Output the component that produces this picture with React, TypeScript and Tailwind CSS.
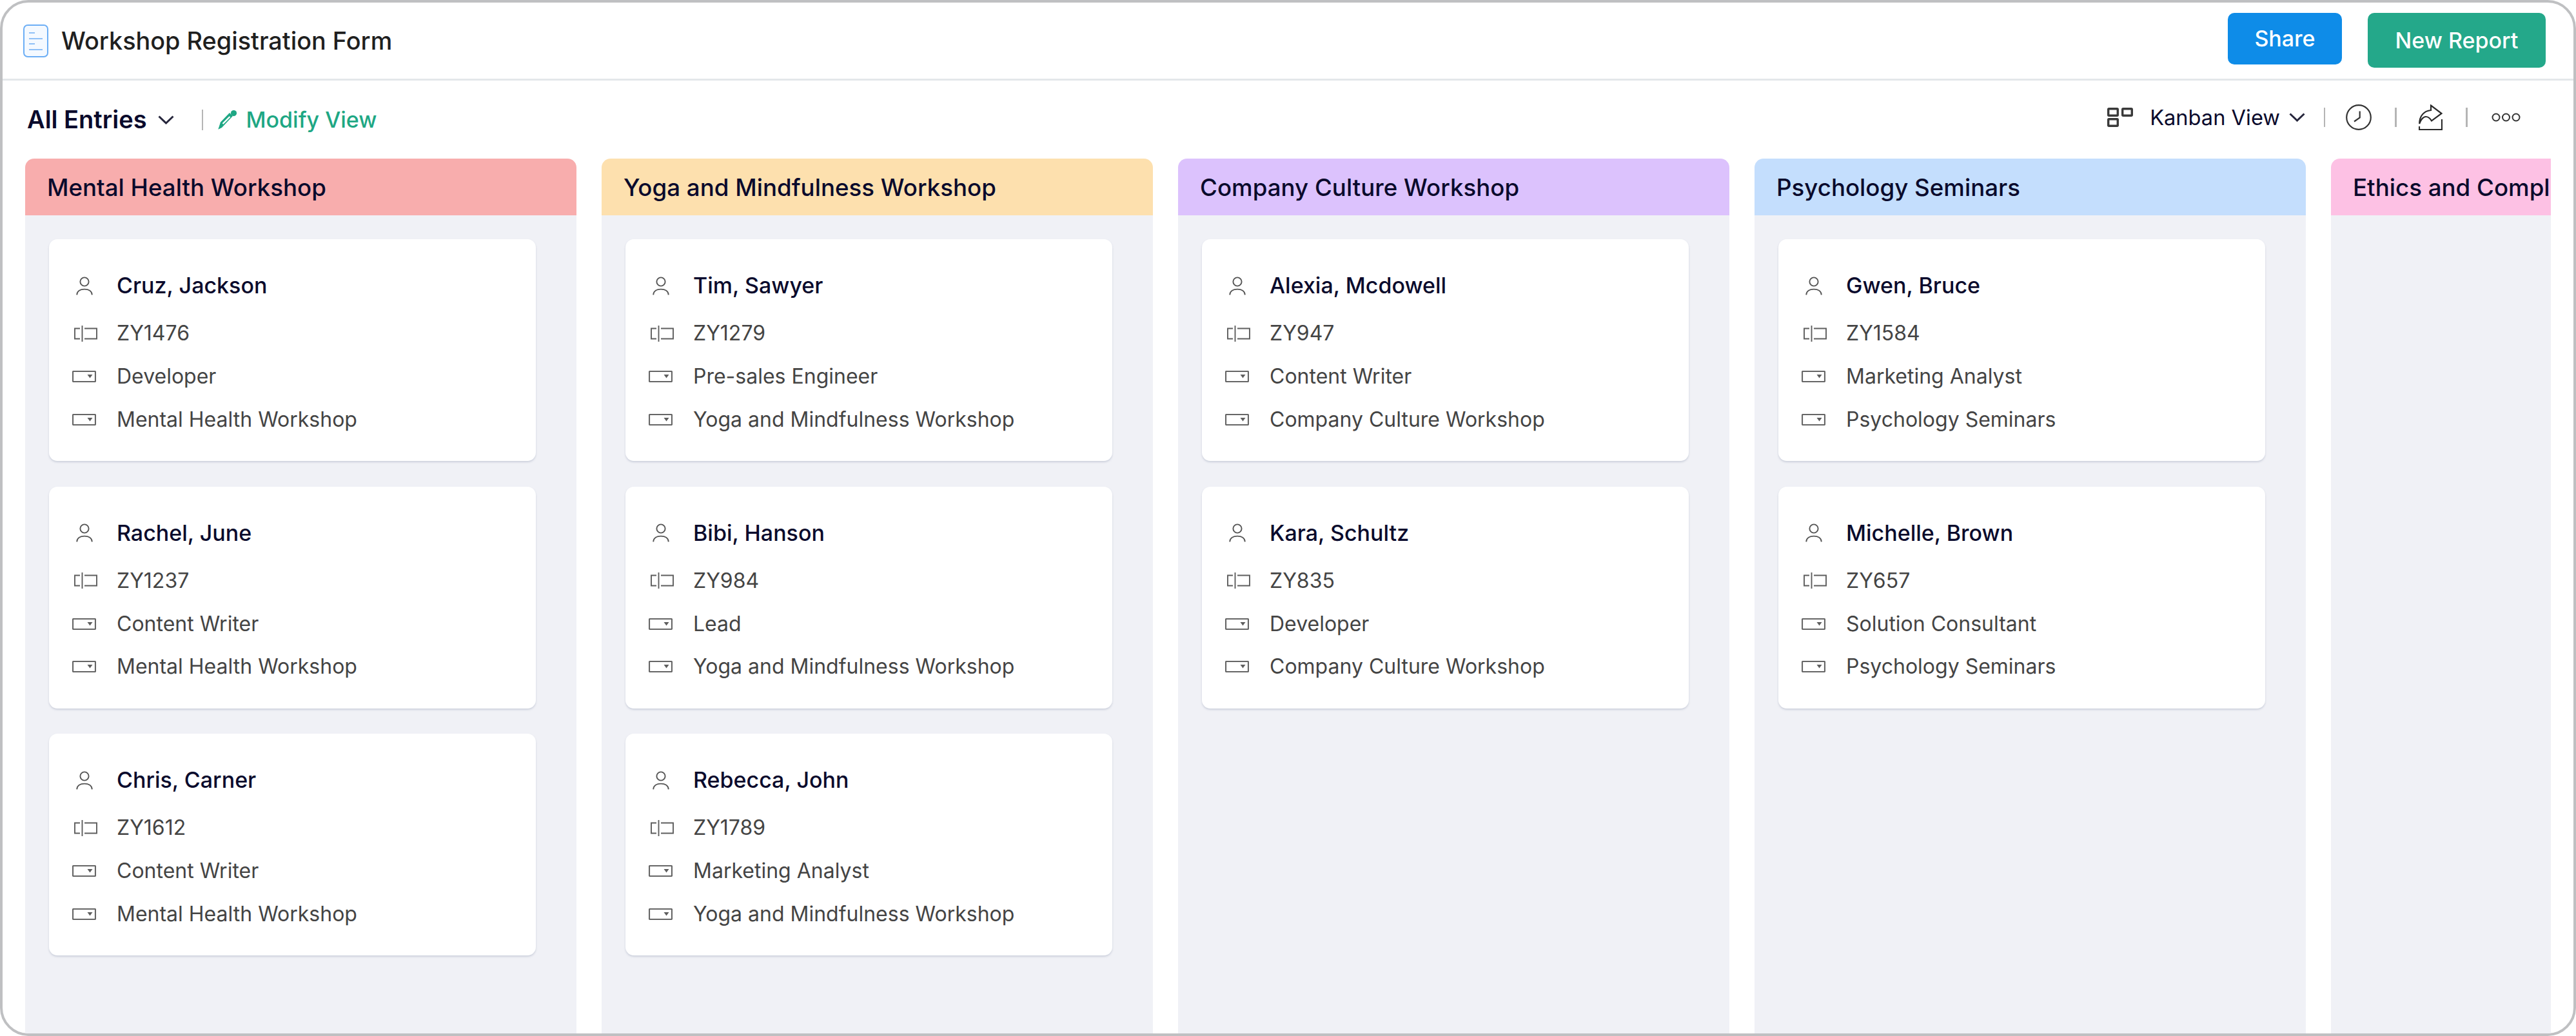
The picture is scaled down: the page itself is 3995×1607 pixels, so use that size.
const font = "font-['Inter','Liberation_Sans',sans-serif]";

type Entry = { name: string; id: string; role: string };
type Column = { title: string; header: string; entries: Entry[] };

const columns: Column[] = [
  {
    title: "Mental Health Workshop",
    header: "bg-[#f8adad]",
    entries: [
      { name: "Cruz, Jackson", id: "ZY1476", role: "Developer" },
      { name: "Rachel, June", id: "ZY1237", role: "Content Writer" },
      { name: "Chris, Carner", id: "ZY1612", role: "Content Writer" },
    ],
  },
  {
    title: "Yoga and Mindfulness Workshop",
    header: "bg-[#fde0ae]",
    entries: [
      { name: "Tim, Sawyer", id: "ZY1279", role: "Pre-sales Engineer" },
      { name: "Bibi, Hanson", id: "ZY984", role: "Lead" },
      { name: "Rebecca, John", id: "ZY1789", role: "Marketing Analyst" },
    ],
  },
  {
    title: "Company Culture Workshop",
    header: "bg-[#dcc2fd]",
    entries: [
      { name: "Alexia, Mcdowell", id: "ZY947", role: "Content Writer" },
      { name: "Kara, Schultz", id: "ZY835", role: "Developer" },
    ],
  },
  {
    title: "Psychology Seminars",
    header: "bg-[#c4defd]",
    entries: [
      { name: "Gwen, Bruce", id: "ZY1584", role: "Marketing Analyst" },
      { name: "Michelle, Brown", id: "ZY657", role: "Solution Consultant" },
    ],
  },
  {
    title: "Ethics and Compliance Workshop",
    header: "bg-[#fdc1e4]",
    entries: [],
  },
];

function UserIcon() {
  return (
    <svg width="26" height="29" viewBox="0 0 26 29" fill="none" stroke="#555" strokeWidth="1.9" className="ml-[6px] shrink-0">
      <circle cx="13" cy="8" r="6.6" />
      <path d="M1.2 28.4C1.6 22.6 6.4 19.6 13 19.6S24.4 22.6 24.8 28.4" />
    </svg>
  );
}

function IdIcon() {
  return (
    <svg width="36" height="25" viewBox="0 0 36 25" fill="none" stroke="#5e5e5e" strokeWidth="1.9" className="ml-[3px] shrink-0">
      <path d="M9 4.5H1V20.5H9" />
      <path d="M12.5 0V25" />
      <path d="M16 4.5H35V20.5H16" />
    </svg>
  );
}

function DropIcon() {
  return (
    <svg width="37" height="18" viewBox="0 0 37 18" fill="none" className="shrink-0">
      <rect x="1" y="1" width="35" height="16" rx="1" stroke="#666" strokeWidth="2.2" />
      <path d="M23.5 6H31.5L27.5 11.5Z" fill="#5e5e5e" />
    </svg>
  );
}

function Chevron() {
  return (
    <svg width="25" height="14" viewBox="0 0 25 14" fill="none" stroke="#26263c" strokeWidth="3" className="shrink-0">
      <path d="M1.5 1.5L12.5 12L23.5 1.5" />
    </svg>
  );
}

function Card({ entry, title }: { entry: Entry; title: string }) {
  return (
    <div className="flex h-[344px] w-[755px] shrink-0 flex-col rounded-[13px] bg-white pl-[36px] pt-[35px] shadow-[0_2px_3px_rgba(190,195,210,0.7)]">
      <div className="flex h-[74px] items-center">
        <div className="w-[69px] shrink-0"><UserIcon /></div>
        <span className="text-[34px] font-[550] leading-none text-[#0a0a2c]">{entry.name}</span>
      </div>
      <div className="mt-[4px] flex h-[66px] items-center">
        <div className="w-[69px] shrink-0"><IdIcon /></div>
        <span className="text-[32px] leading-none text-[#444]">{entry.id}</span>
      </div>
      <div className="mt-[1px] flex h-[66px] items-center">
        <div className="w-[69px] shrink-0"><DropIcon /></div>
        <span className="text-[32px] leading-none text-[#444]">{entry.role}</span>
      </div>
      <div className="flex h-[67px] items-center">
        <div className="w-[69px] shrink-0"><DropIcon /></div>
        <span className="text-[32px] leading-none text-[#444]">{title}</span>
      </div>
    </div>
  );
}

function Board({ column }: { column: Column }) {
  return (
    <div className="flex h-full w-[855px] shrink-0 flex-col">
      <div className={`flex h-[88px] shrink-0 items-center overflow-hidden whitespace-nowrap rounded-t-[14px] pl-[34px] pt-[1px] text-[36.7px] font-medium text-[#0a0a2c] ${column.header}`}>
        {column.title}
      </div>
      <div className="flex flex-1 flex-col gap-[39.5px] bg-[#f0f1f6] pl-[37px] pt-[37px]">
        {column.entries.map((e) => (
          <Card key={e.name} entry={e} title={column.title} />
        ))}
      </div>
    </div>
  );
}

export default function App() {
  return (
    <div className={`h-[1607px] w-[3995px] bg-white ${font}`}>
      <div className="flex h-full w-full flex-col overflow-hidden rounded-[44px] border-[4px] border-[#bfc0c2] bg-white">
        <header className="flex h-[121px] shrink-0 items-start justify-between border-b-[3px] border-[#e4e7ea] pl-[32px] pr-[43px]">
          <div className="flex h-[118px] items-center gap-[20px]">
            <svg width="39" height="51" viewBox="0 0 39 51" fill="none" className="shrink-0">
              <rect x="1" y="1" width="37" height="49" rx="6" fill="#f4f9ff" stroke="#6caef5" strokeWidth="2" />
              <path d="M9 13H18M9 22H30M9 30H18M9 39H30" stroke="#8fc0f7" strokeWidth="2.2" />
            </svg>
            <h1 className="text-[37.8px] font-medium text-[#1f1f1f]">Workshop Registration Form</h1>
          </div>
          <div className="flex items-start gap-[40px] pt-[16px]">
            <button className="flex h-[80px] w-[177px] items-center justify-center rounded-[10px] bg-[#0e8ce8] pb-[2px] text-[34px] font-medium text-white">Share</button>
            <button className="flex h-[85px] w-[276px] items-center justify-center rounded-[10px] bg-[#24a88a] text-[34px] font-medium text-white">New Report</button>
          </div>
        </header>

        <div className="flex h-[121px] shrink-0 items-center justify-between pl-[38px] pr-[82px]">
          <div className="flex items-center">
            <span className="text-[38px] font-semibold text-[#0a0a2c]">All Entries</span>
            <span className="ml-[17px]"><Chevron /></span>
            <span className="ml-[43px] h-[32px] w-[2px] bg-[#b5b5b5]" />
            <svg width="30" height="30" viewBox="0 0 30 30" className="ml-[23px] shrink-0">
              <path d="M0.3 29.7L4 18.5L18 4L23 9L6 27Z" fill="#1ea784" />
              <path d="M7.5 21L18.5 10" stroke="#fff" strokeWidth="2.4" />
              <circle cx="24.5" cy="4.6" r="4.6" fill="#1ea784" />
            </svg>
            <span className="ml-[14px] text-[34px] font-medium text-[#1ea784]">Modify View</span>
          </div>
          <div className="mb-[7px] flex items-center">
            <svg width="40" height="30" viewBox="0 0 40 30" fill="none" stroke="#3a3a3a" strokeWidth="3.4" className="shrink-0">
              <rect x="1.7" y="1.7" width="14.6" height="10.6" rx="1" />
              <rect x="23.7" y="1.7" width="14.6" height="10.6" rx="1" />
              <rect x="1.7" y="17.7" width="14.6" height="10.6" rx="1" />
            </svg>
            <span className="ml-[26px] text-[32.6px] font-normal text-[#0a0a2c]">Kanban View</span>
            <span className="ml-[14px]"><Chevron /></span>
            <span className="ml-[29px] h-[30px] w-[2px] bg-[#b5b5b5]" />
            <svg width="40" height="40" viewBox="0 0 40 40" fill="none" stroke="#333" strokeWidth="2.2" className="ml-[32px] shrink-0">
              <circle cx="20" cy="20" r="18.8" />
              <path d="M21.7 10.5V20.5L13 26.5" />
            </svg>
            <span className="ml-[36px] h-[30px] w-[3px] bg-[#b5b5b5]" />
            <svg width="37" height="40" viewBox="0 0 37 40" fill="none" stroke="#2a2a2a" strokeWidth="2.2" className="ml-[34px] shrink-0">
              <path d="M1.2 30C1.2 18 8 10 19 9V1.5L35.5 14L20 25.5C18 22 15 19 11 19C7 19 3 24 1.2 30Z" />
              <path d="M1 34V39H36V23" />
            </svg>
            <span className="ml-[36px] h-[30px] w-[3px] bg-[#b5b5b5]" />
            <svg width="45" height="14" viewBox="0 0 45 14" fill="none" stroke="#333" strokeWidth="2" className="ml-[37px] shrink-0">
              <circle cx="7" cy="7" r="5.5" />
              <circle cx="22.5" cy="7" r="5.5" />
              <circle cx="38" cy="7" r="5.5" />
            </svg>
          </div>
        </div>

        <div className="ml-[35px] flex min-h-0 w-[3917px] flex-1 gap-[39px] overflow-hidden">
          {columns.map((c) => (
            <Board key={c.title} column={c} />
          ))}
        </div>
      </div>
    </div>
  );
}
